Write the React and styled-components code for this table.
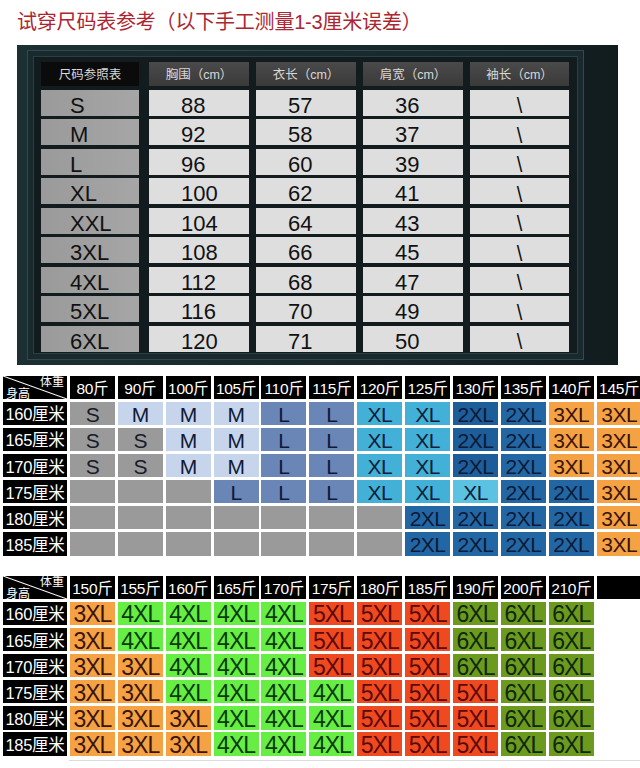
import React from 'react';
import styled, { createGlobalStyle } from 'styled-components';

const GlobalStyle = createGlobalStyle`
  body {
    margin: 0;
    background: #fff;
    font-family: "Liberation Sans", "Noto Sans CJK SC", sans-serif;
  }
`

const Page = styled.div`
  width: 640px;
  height: 768px;
  overflow: hidden;
  background: #fff;
`

const Title = styled.div`
  padding: 10px 0 0 17px;
  font-size: 20px;
  line-height: 24px;
  color: #ac2630;
  letter-spacing: -0.2px;
`

const Panel = styled.div`
  margin: 11px 0 0 17px;
  width: 601px;
  box-sizing: border-box;
  padding: 5px 34px 5px 10px;
  background: linear-gradient(90deg, #1c3034 0%, #17272b 60%, #111c1f 100%);
`

const Frame = styled.div`
  border: 1px solid #34494d;
  padding: 11px 14px 7px 13px;
  background: #121b1d;
  box-shadow: inset 0 0 0 5px #192a2e, inset 0 0 0 6px #2b3f43;
`

const SizeGrid = styled.div`
  display: grid;
  grid-template-columns: 101px 100px 100px 100px 99px;
  grid-template-rows: 24px repeat(9, 26px);
  column-gap: 7px;
  row-gap: 3.5px;
`

const HeadCell = styled.div`
  margin-right: ${props => (props.$first ? '3px' : '0')};
  margin-bottom: 0.5px;
  background: ${props => (props.$first ? '#0b0b0b' : 'linear-gradient(180deg, #4a4a4a, #3a3a3a)')};
  color: #d8d8d8;
  font-size: 12.5px;
  display: flex;
  align-items: center;
  justify-content: center;
`

const DataCell = styled.div`
  margin-right: ${props => (props.$first ? '3px' : '0')};
  background: ${props => (props.$first ? 'linear-gradient(90deg, #9a9a9a, #a6a6a6)' : '#dedede')};
  color: #111;
  font-size: 22px;
  box-sizing: border-box;
  padding-top: 6px;
  padding-left: ${props => (props.$center ? '0' : props.$first ? '29px' : '32px')};
  display: flex;
  align-items: center;
  justify-content: ${props => (props.$center ? 'center' : 'flex-start')};
`

const Slash = styled.span`
  display: inline-block;
  font-size: 20px;
  transform: scaleY(1.1);
`

const Chart = styled.div`
  margin: ${props => props.$top}px 0 0 3px;
  display: grid;
  grid-template-columns: 64px repeat(12, 45px);
  grid-auto-rows: 23.5px;
  column-gap: 2.9px;
  row-gap: 2.6px;
`

const Corner = styled.div`
  background: linear-gradient(to top right, #000 calc(50% - 1px), #fff 50%, #000 calc(50% + 1px));
  color: #fff;
  font-size: 12px;
  line-height: 12px;
  display: flex;
  flex-direction: column;
  justify-content: space-between;
  padding: 0 3px 0 3px;
`

const CornerLabel = styled.span`
  align-self: ${props => (props.$end ? 'flex-end' : 'flex-start')};
`

const WeightHead = styled.div`
  background: #000;
  color: #fff;
  font-size: 15.5px;
  display: flex;
  align-items: center;
  justify-content: center;
  white-space: nowrap;
  letter-spacing: -0.3px;
`

const HeightHead = styled.div`
  background: #000;
  color: #fff;
  font-size: 16.5px;
  display: flex;
  align-items: center;
  justify-content: center;
  white-space: nowrap;
  letter-spacing: -0.3px;
`

const palette = {
  S: ['#9a9a9a', '#161c2a'],
  M: ['#c6d5ec', '#101a36'],
  L: ['#6a86b6', '#0f1838'],
  XL: ['#43b0d8', '#0d1f3a'],
  XLb: ['#5cc2e2', '#0d1f3a'],
  '2XL': ['#2267a4', '#0b1a36'],
  '2XLb': ['#1d5d99', '#0b1a36'],
  '3XL': ['#f4a244', '#3a1406'],
  '4XL': ['#66ee44', '#0c3a0c'],
  '5XL': ['#ef4a1f', '#5a0808'],
  '6XL': ['#6b9a1f', '#0f270a'],
  '-': ['#9a9a9a', '#000'],
  '': ['transparent', '#000'],
}

const SizeCell = styled.div`
  background: ${props => palette[props.$size][0]};
  color: ${props => palette[props.$size][1]};
  font-size: ${props => props.$font}px;
  letter-spacing: ${props => props.$tight}px;
  box-sizing: border-box;
  padding-top: 3px;
  display: flex;
  align-items: center;
  justify-content: center;
  white-space: nowrap;
`

const Rule = styled.div`
  margin: 4px 0 0 69px;
  border-top: 1px solid #dcdcdc;
`

const sizeRows = [
  ['S', 88, 57, 36],
  ['M', 92, 58, 37],
  ['L', 96, 60, 39],
  ['XL', 100, 62, 41],
  ['XXL', 104, 64, 43],
  ['3XL', 108, 66, 45],
  ['4XL', 112, 68, 47],
  ['5XL', 116, 70, 49],
  ['6XL', 120, 71, 50],
]

const chartA = {
  weights: ['80斤', '90斤', '100斤', '105斤', '110斤', '115斤', '120斤', '125斤', '130斤', '135斤', '140斤', '145斤'],
  rows: [
    ['160厘米', ['S', 'M', 'M', 'M', 'L', 'L', 'XL', 'XL', '2XLb', '2XL', '3XL', '3XL']],
    ['165厘米', ['S', 'S', 'M', 'M', 'L', 'L', 'XL', 'XL', '2XLb', '2XL', '3XL', '3XL']],
    ['170厘米', ['S', 'S', 'M', 'M', 'L', 'L', 'XL', 'XL', '2XLb', '2XL', '3XL', '3XL']],
    ['175厘米', ['-', '-', '-', 'L', 'L', 'L', 'XL', 'XL', 'XLb', '2XL', '2XL', '3XL']],
    ['180厘米', ['-', '-', '-', '-', '-', '-', '-', '2XL', '2XL', '2XL', '2XL', '3XL']],
    ['185厘米', ['-', '-', '-', '-', '-', '-', '-', '2XL', '2XL', '2XL', '2XL', '3XL']],
  ],
}

const chartB = {
  weights: ['150斤', '155斤', '160斤', '165斤', '170斤', '175斤', '180斤', '185斤', '190斤', '200斤', '210斤', ''],
  rows: [
    ['160厘米', ['3XL', '4XL', '4XL', '4XL', '4XL', '5XL', '5XL', '5XL', '6XL', '6XL', '6XL', '']],
    ['165厘米', ['3XL', '4XL', '4XL', '4XL', '4XL', '5XL', '5XL', '5XL', '6XL', '6XL', '6XL', '']],
    ['170厘米', ['3XL', '3XL', '4XL', '4XL', '4XL', '5XL', '5XL', '5XL', '6XL', '6XL', '6XL', '']],
    ['175厘米', ['3XL', '3XL', '4XL', '4XL', '4XL', '4XL', '5XL', '5XL', '5XL', '6XL', '6XL', '']],
    ['180厘米', ['3XL', '3XL', '3XL', '4XL', '4XL', '4XL', '5XL', '5XL', '5XL', '6XL', '6XL', '']],
    ['185厘米', ['3XL', '3XL', '3XL', '4XL', '4XL', '4XL', '5XL', '5XL', '5XL', '6XL', '6XL', '']],
  ],
}

const label = (size) => (size === '-' ? '' : size.replace('b', ''))

const WeightChart = ({ data, top, font, tight }) => {
  return (<Chart $top={top}>
    <Corner>
      <CornerLabel $end>体重</CornerLabel>
      <CornerLabel>身高</CornerLabel>
    </Corner>
    {data.weights.map((w, i) => <WeightHead key={i}>{w}</WeightHead>)}
    {data.rows.map(([height, sizes]) => (
      <React.Fragment key={height}>
        <HeightHead>{height}</HeightHead>
        {sizes.map((size, i) => (
          <SizeCell key={i} $size={size} $font={font} $tight={tight}>
            {label(size)}
          </SizeCell>
        ))}
      </React.Fragment>
    ))}
  </Chart>)
}

const App = () => {
  return (<Page>
    <GlobalStyle />
    <Title>试穿尺码表参考（以下手工测量1-3厘米误差）</Title>
    <Panel>
      <Frame>
        <SizeGrid>
          <HeadCell $first>尺码参照表</HeadCell>
          <HeadCell>胸围（cm）</HeadCell>
          <HeadCell>衣长（cm）</HeadCell>
          <HeadCell>肩宽（cm）</HeadCell>
          <HeadCell>袖长（cm）</HeadCell>
          {sizeRows.map(([size, chest, length, shoulder]) => (
            <React.Fragment key={size}>
              <DataCell $first>{size}</DataCell>
              <DataCell>{chest}</DataCell>
              <DataCell>{length}</DataCell>
              <DataCell>{shoulder}</DataCell>
              <DataCell $center><Slash>\</Slash></DataCell>
            </React.Fragment>
          ))}
        </SizeGrid>
      </Frame>
    </Panel>
    <WeightChart data={chartA} top={11} font={21} tight={-0.5} />
    <WeightChart data={chartB} top={20} font={23} tight={-1} />
    <Rule />
  </Page>);
}

export default App;
